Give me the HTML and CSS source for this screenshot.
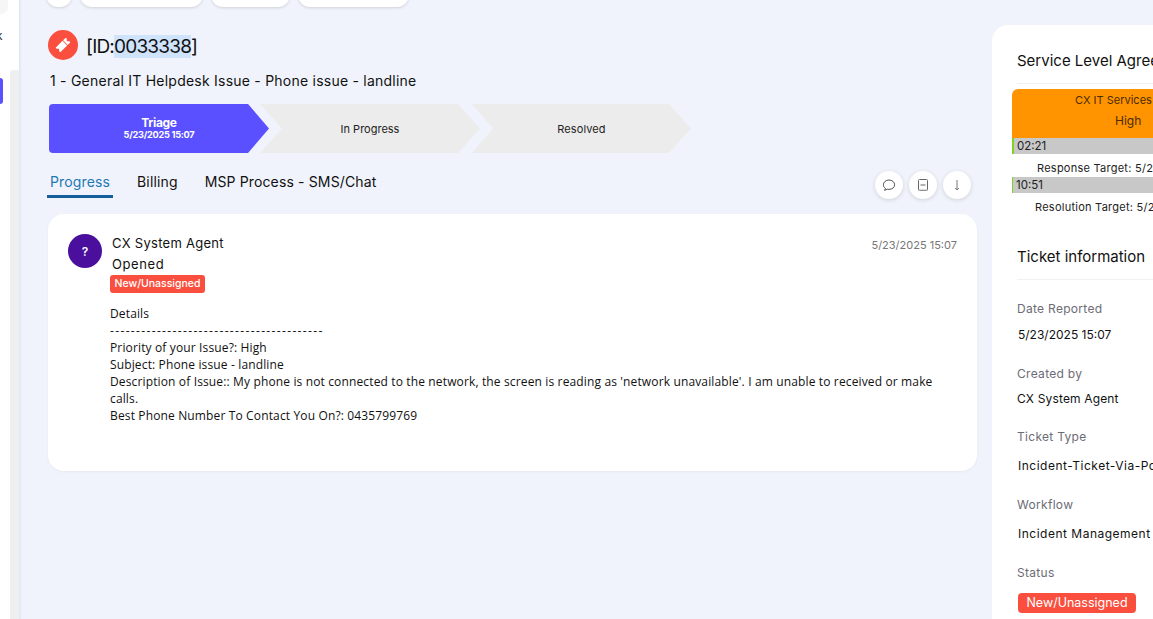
FILE: index.html
```html
<!DOCTYPE html>
<html lang="en">
<head>
<meta charset="utf-8">
<title>Ticket 0033338</title>
<link rel="stylesheet" href="styles.css">
</head>
<body>
<div class="app">
  <aside class="rail">
    <span class="rail-corner"></span>
    <span class="rail-glyph">k</span>
    <div class="rail-track"></div>
    <span class="rail-active"></span>
  </aside>
  <main class="content">
    <div class="toolbar">
      <span class="pill pill-round"></span>
      <span class="pill pill-a"></span>
      <span class="pill pill-b"></span>
      <span class="pill pill-c"></span>
    </div>
    <div class="title-row">
      <span class="ticket-badge">
        <svg width="20" height="20" viewBox="0 0 24 24"><g transform="rotate(-45 12 12)"><path fill="#fff" d="M3.5 8h11.6v8H3.5v-2.4a1.6 1.6 0 0 0 0-3.2z"/><path fill="#fff" d="M16.1 8h4.4v2.4a1.6 1.6 0 0 0 0 3.2V16h-4.4z"/></g></svg>
      </span>
      <h1 class="ticket-id">[ID:<span class="selected">0033338</span>]</h1>
    </div>
    <h2 class="subject">1 - General IT Helpdesk Issue - Phone issue - landline</h2>
    <div class="stages">
      <div class="stage stage-active"><strong>Triage</strong><small>5/23/2025 15:07</small></div>
      <div class="stage stage-next">In Progress</div>
      <div class="stage stage-last">Resolved</div>
    </div>
    <div class="tabs-row">
      <nav class="tabs">
        <a class="tab tab-active">Progress</a>
        <a class="tab">Billing</a>
        <a class="tab">MSP Process - SMS/Chat</a>
      </nav>
      <div class="tools">
        <button class="tool"><svg width="14" height="14" viewBox="0 0 14 14" fill="none" stroke="#555" stroke-width="1"><path d="M3.4 10.4C2 9.5 1.4 8.2 1.4 6.8c0-2.7 2.5-4.8 5.6-4.8s5.6 2.1 5.6 4.8-2.5 4.6-5.6 4.6c-.6 0-1.2-.1-1.8-.2l-2.6 1.2z"/></svg></button>
        <button class="tool"><svg width="14" height="14" viewBox="0 0 14 14" fill="none" stroke="#666" stroke-width="1"><rect x="2.5" y="1.5" width="9" height="11" rx="1"/><path d="M4.5 7h5"/><path d="M3 12h8" stroke="#bbb"/></svg></button>
        <button class="tool"><svg width="14" height="14" viewBox="0 0 14 14" fill="none" stroke="#777" stroke-width="1"><path d="M7 2v10M5 10L7 12l2-2"/></svg></button>
      </div>
    </div>
    <article class="card">
      <span class="avatar">?</span>
      <div class="entry">
        <div class="entry-head">
          <span class="author">CX System Agent</span>
          <time class="entry-time">5/23/2025 15:07</time>
        </div>
        <div class="action">Opened</div>
        <span class="status status-small">New/Unassigned</span>
        <div class="details">
          <p>Details</p>
          <p class="dashes">-----------------------------------------</p>
          <p>Priority of your Issue?: High</p>
          <p>Subject: Phone issue - landline</p>
          <p>Description of Issue:: My phone is not connected to the network, the screen is reading as 'network unavailable'. I am unable to received or make calls.</p>
          <p>Best Phone Number To Contact You On?: 0435799769</p>
        </div>
      </div>
    </article>
  </main>
  <aside class="side">
    <h3 class="side-title">Service Level Agreement</h3>
    <div class="sla">
      <div class="sla-head">
        <div class="sla-name">CX IT Services</div>
        <div class="sla-priority">High</div>
      </div>
      <div class="sla-bar sla-bar-a">02:21</div>
      <div class="sla-target sla-target-a">Response Target: 5/23/2025 17:28</div>
      <div class="sla-bar sla-bar-b">10:51</div>
      <div class="sla-target sla-target-b">Resolution Target: 5/24/2025 01:58</div>
    </div>
    <h3 class="side-title side-title-info">Ticket information</h3>
    <dl class="info">
      <dt>Date Reported</dt><dd class="gap-6">5/23/2025 15:07</dd>
      <dt>Created by</dt><dd class="gap-5 flush">CX System Agent</dd>
      <dt class="tight">Ticket Type</dt><dd class="gap-9 wide">Incident-Ticket-Via-Portal</dd>
      <dt>Workflow</dt><dd class="gap-9 wide">Incident Management</dd>
      <dt>Status</dt><dd class="gap-10"><span class="status status-large">New/Unassigned</span></dd>
    </dl>
  </aside>
</div>
</body>
</html>
```
FILE: styles.css
```css
* { box-sizing: border-box; }
html, body { margin: 0; height: 100%; overflow: hidden; }
body { background: #f0f3fb; color: #111; font-family: "Inter", "Liberation Sans", sans-serif; }
.app { display: flex; width: 1153px; height: 619px; overflow: hidden; }

.rail { flex: 0 0 19px; background: #fff; position: relative; }
.rail-corner { position: absolute; left: 0; top: 0; width: 8px; height: 14px; background: #f6f6f6; border-radius: 0 0 7px 0; }
.rail-glyph { position: absolute; left: -4px; top: 29px; font-size: 12px; line-height: 14px; color: #333; }
.rail-track { position: absolute; left: 10px; top: 70px; bottom: 0; width: 9px; background: #efefef; border-radius: 4px 0 0 0; }
.rail-active { position: absolute; left: 0; top: 78px; width: 3px; height: 26px; background: #5a50ff; border-radius: 0 4px 4px 0; }

.content { flex: 0 0 958px; padding: 0 0 0 29px; background: linear-gradient(90deg, rgba(120,140,190,.14), rgba(120,140,190,0) 3px); }
.toolbar { display: flex; gap: 8px; height: 7px; align-items: flex-end; margin-left: -2px; }
.pill { display: block; height: 24px; flex: none; background: #fff; border-radius: 12px; box-shadow: 0 1px 3px rgba(0,0,0,.14); }
.pill-round { width: 26px; }
.pill-a { width: 123px; }
.pill-b { width: 79px; }
.pill-c { width: 111px; }

.title-row { display: flex; align-items: center; gap: 8px; margin-top: 23px; height: 30px; }
.ticket-badge { width: 30px; height: 30px; border-radius: 50%; background: #fa4f3f; display: flex; align-items: center; justify-content: center; }
.ticket-id { margin: 0; padding-top: 4px; font-size: 19px; font-weight: 400; line-height: 26px; color: #111; letter-spacing: -.8px; }
.selected { background: #cfe3fb; }
.subject { margin: 11px 0 0 2px; height: 20px; font-size: 14px; line-height: 20px; font-weight: 400; color: #111; white-space: nowrap; letter-spacing: .23px; }

.stages { display: flex; margin: 13px 0 0 1px; height: 49px; }
.stage { height: 49px; display: flex; flex-direction: column; align-items: center; justify-content: center; font-size: 11px; color: #222; }
.stage-active { width: 220px; background: #5a50ff; color: #fff; border-radius: 4px 0 0 4px; clip-path: polygon(0 0, 199px 0, 100% 50%, 199px 100%, 0 100%); }
.stage-active strong { font-size: 12px; line-height: 13px; font-weight: 700; letter-spacing: -.3px; }
.stage-active small { font-size: 9.2px; line-height: 12px; font-weight: 700; letter-spacing: -.27px; }
.stage-next { width: 220px; margin-left: -9px; background: #ececec; clip-path: polygon(0 0, 198px 0, 100% 50%, 198px 100%, 0 100%, 22px 50%); }
.stage-last { width: 219px; margin-left: -8px; background: #ececec; letter-spacing: .1px; clip-path: polygon(0 0, 197px 0, 100% 50%, 197px 100%, 0 100%, 21px 50%); }

.tabs-row { display: flex; justify-content: space-between; margin-top: 16px; width: 923px; height: 45px; }
.tabs { display: flex; align-items: flex-start; gap: 21px; margin-left: -1px; }
.tab { display: block; height: 29px; padding: 4px 3px 0; font-size: 14px; line-height: 18px; color: #111; white-space: nowrap; letter-spacing: .14px; }
.tab-active { color: #1f78b4; border-bottom: 3px solid #135f9c; }
.tools { display: flex; gap: 6px; padding-top: 2px; }
.tool { width: 28px; height: 28px; padding: 0; border: 0; border-radius: 50%; background: #fff; box-shadow: 0 1px 4px rgba(0,0,0,.14); display: flex; align-items: center; justify-content: center; }

.card { display: flex; width: 929px; height: 257px; background: #fff; border-radius: 16px; padding: 20px 20px 0; gap: 10px; box-shadow: 0 1px 3px rgba(0,0,0,.04); }
.avatar { flex: none; width: 34px; height: 34px; border-radius: 50%; background: #4a0f9c; color: #fff; font-size: 12px; font-weight: 600; display: flex; align-items: center; justify-content: center; }
.entry { flex: 1; min-width: 0; }
.entry-head { display: flex; justify-content: space-between; height: 20px; line-height: 20px; margin-top: -1px; }
.author { font-size: 13px; color: #111; letter-spacing: .28px; }
.entry-time { font-size: 11px; color: #777; padding-top: 2px; }
.action { margin-top: 1px; font-size: 13px; line-height: 20px; color: #111; letter-spacing: .6px; }
.status { display: inline-block; background: #fa4f3f; color: #fff; border-radius: 3px; white-space: nowrap; }
.status-small { display: block; width: 95px; height: 18px; margin: 1px 0 0 -2px; font-size: 10.5px; line-height: 18px; font-weight: 500; text-align: center; }
.details { margin: 12px 0 0 -2px; font-family: "Open Sans", "Noto Sans", sans-serif; font-size: 12px; line-height: 17px; color: #111; letter-spacing: .14px; }
.details p { margin: 0; }
.details .dashes { letter-spacing: 1.35px; white-space: nowrap; }

.side { flex: 0 0 161px; margin: 25px 0 0 15px; background: #fff; border-radius: 16px 0 0 0; padding: 0 0 0 20px; overflow: hidden; min-width: 0; }
.side-title { margin: 0 0 0 5px; width: 300px; font-size: 15px; font-weight: 400; line-height: 20px; height: 59px; padding-top: 26px; border-bottom: 1px solid #f1f1f1; white-space: nowrap; color: #111; }
.sla { width: 400px; margin-top: 5px; }
.sla-head { height: 49px; background: #ff9300; border-radius: 6px 0 0 0; width: 300px; position: relative; font-size: 11px; color: #4a2c00; }
.sla-name { position: absolute; left: 63px; top: 3px; line-height: 16px; white-space: nowrap; }
.sla-priority { position: absolute; left: 103px; top: 23px; font-size: 12px; line-height: 18px; }
.sla-bar { height: 16px; background: #c8c8c8; width: 300px; font-size: 11.5px; line-height: 16px; color: #222; }
.sla-bar-a { border-left: 2px solid #7ed321; padding-left: 3px; }
.sla-bar-b { border-left: 1px solid #7ed321; padding-left: 3px; }
.sla-target { height: 23px; font-size: 11px; line-height: 29px; white-space: nowrap; color: #222; letter-spacing: .25px; }
.sla-target-a { padding-left: 25px; }
.sla-target-b { padding-left: 23px; }
.side-title-info { margin-top: 20px; height: 44px; padding-top: 0; line-height: 42px; }
.info { margin: 0 0 0 5px; width: 200px; font-size: 12px; }
.info dt { margin-top: 19px; height: 20px; line-height: 20px; color: #6c6c76; letter-spacing: .3px; }
.info dt.tight { margin-top: 18px; }
.info dd { margin: 0 0 0 1px; height: 20px; line-height: 20px; white-space: nowrap; color: #111; }
.info dd.gap-5 { margin-top: 5px; }
.info dd.gap-6 { margin-top: 6px; }
.info dd.gap-9 { margin-top: 9px; }
.info dd.gap-10 { margin-top: 10px; }
.info dd.wide { letter-spacing: .5px; }
.info dd.flush { margin-left: 0; letter-spacing: .15px; }
.status-large { width: 118px; height: 20px; line-height: 20px; font-size: 12.5px; text-align: center; border-radius: 4px; vertical-align: top; }
```
